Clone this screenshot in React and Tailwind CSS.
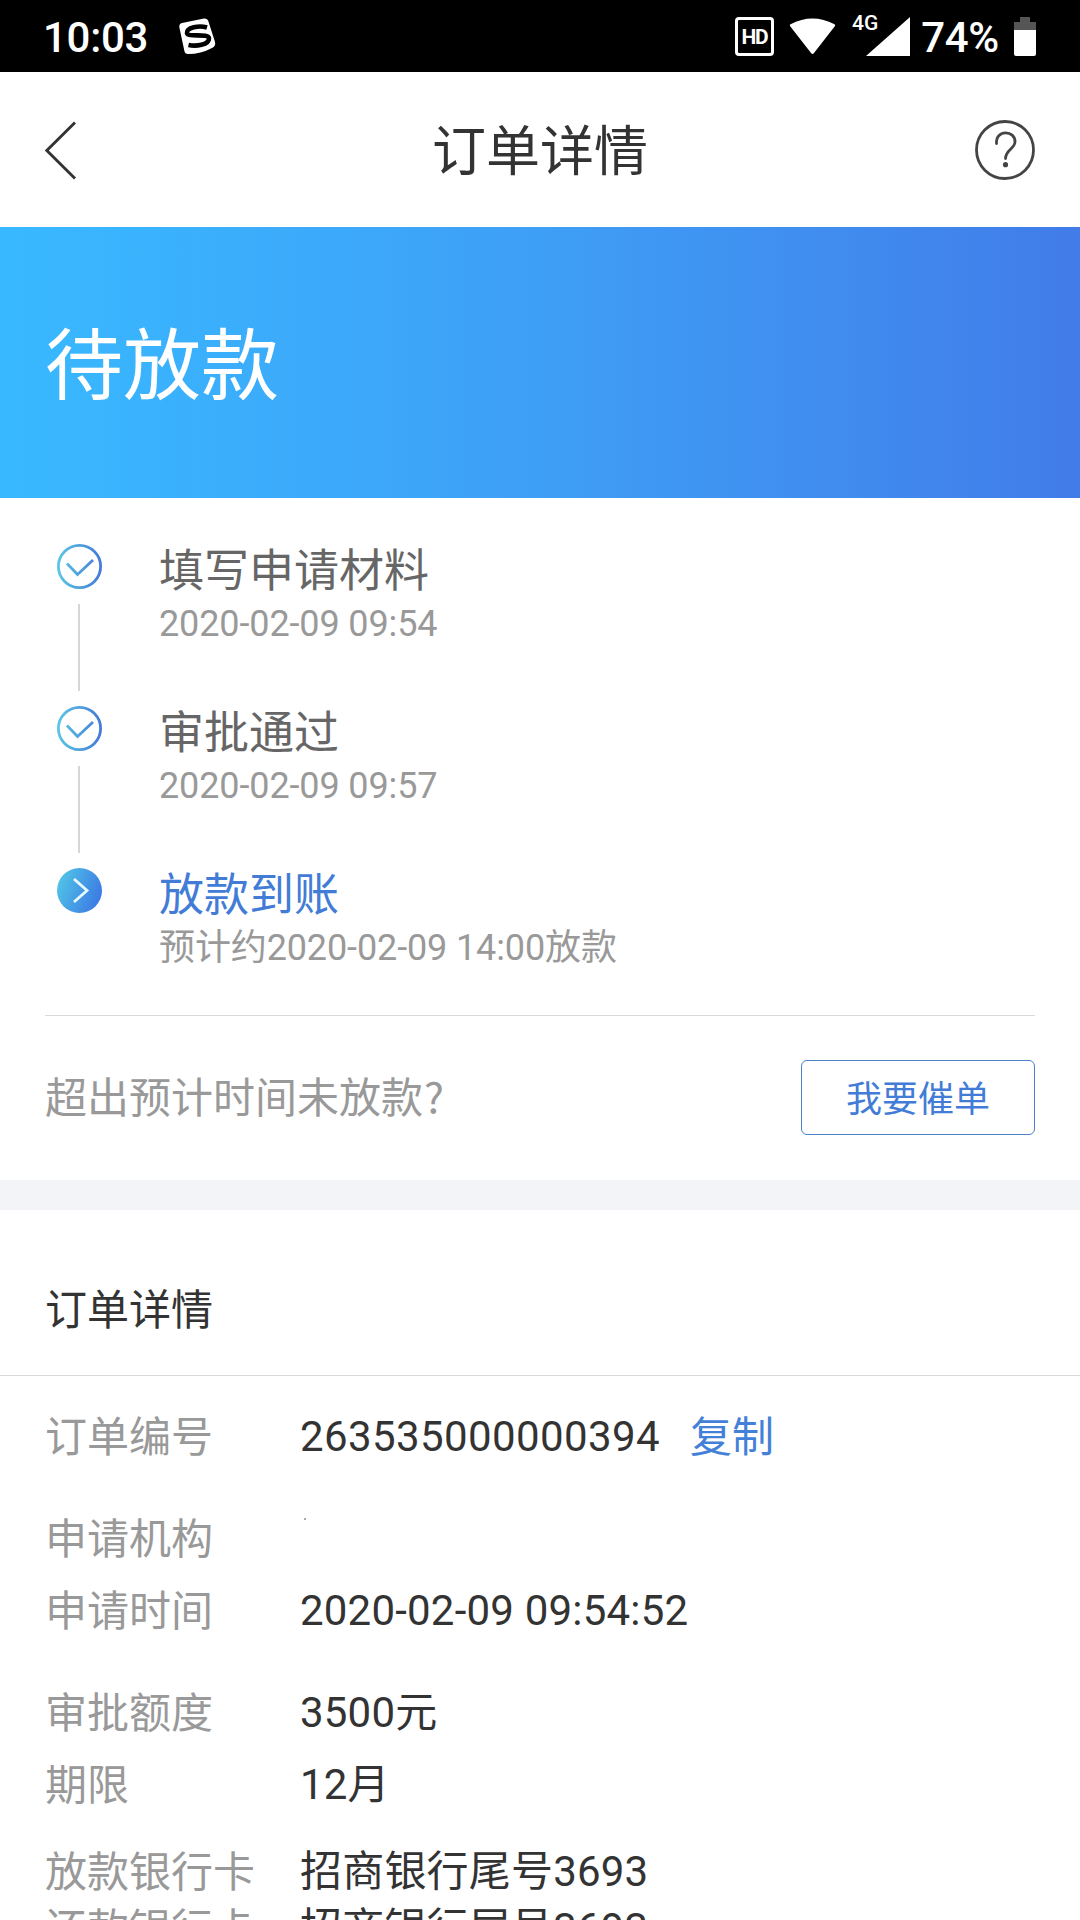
const steps = [
  { title: '填写申请材料', note: '2020-02-09 09:54', done: true },
  { title: '审批通过', note: '2020-02-09 09:57', done: true },
  { title: '放款到账', note: '预计约2020-02-09 14:00放款', done: false },
]

const detailGroups = [
  [{ label: '订单编号', value: '263535000000394', copy: true }],
  [
    { label: '申请机构', value: '' },
    { label: '申请时间', value: '2020-02-09 09:54:52' },
  ],
  [
    { label: '审批额度', value: '3500元' },
    { label: '期限', value: '12月' },
  ],
]

const cards = [
  { label: '放款银行卡', value: '招商银行尾号3693' },
  { label: '还款银行卡', value: '招商银行尾号3693' },
]

function StatusBar() {
  return (
    <div className="flex h-[72px] items-center bg-black pl-[43px] pr-[44px] text-[42px] font-medium leading-[72px] text-white">
      <span className="pt-[3px] tracking-[-0.3px]">10:03</span>
      <svg className="ml-[31px] h-[36px] w-[37px]" viewBox="0 0 37 36">
        <path
          d="M3 5 L25 0.5 Q28.5 0 29.3 3 L36 24 Q37 28 33 30 Q22 36 9 36 Q6 36 5.4 33 L0.3 9 Q0 5.8 3 5Z"
          fill="#fff"
        />
        <path
          d="M28 9.5 C20 7 7.5 9.5 8 15 C8.5 20 30 14.5 30 20.5 C30 27 17 28.5 9.500 27"
          fill="none"
          stroke="#000"
          strokeWidth="4.6"
        />
      </svg>
      <div className="ml-auto flex h-[39px] w-[39px] items-center justify-center rounded-[4px] border-[3px] border-white pt-[2px] text-[21px] font-bold leading-none tracking-[-1.2px]">
        HD
      </div>
      <svg className="ml-[15px] h-[37px] w-[47px]" viewBox="0 0 47 37">
        <path d="M1 8 Q0.5 7 1.5 6.3 Q23.5 -5.5 45.5 6.3 Q46.5 7 46 8 L25 35 Q23.5 37 22 35Z" fill="#fff" />
      </svg>
      <span className="ml-[16px] h-[38px] text-[21px] leading-[12px]">4G</span>
      <svg className="-ml-[12px] h-[39px] w-[44px]" viewBox="0 0 44 39">
        <path d="M44 0V39H0Z" fill="#fff" />
      </svg>
      <span className="ml-[11px] pt-[3px] tracking-[-0.3px]">74%</span>
      <svg className="ml-[15px] h-[39px] w-[22px] flex-none" viewBox="0 0 22 39">
        <path d="M6 0H16V5H22V13H0V5H6Z" fill="#555" />
        <path d="M0 13H22V37Q22 39 20 39H2Q0 39 0 37Z" fill="#fff" />
      </svg>
    </div>
  )
}

function Header() {
  return (
    <header className="flex h-[155px] items-center justify-between px-[45px] text-[#333]">
      <svg className="h-[60px] w-[60px]" viewBox="0 0 60 60" fill="none" stroke="#333" strokeWidth="2.9">
        <path d="M30 2.5 L1.8 30.5 L30 58.5" />
      </svg>
      <h1 className="pt-[7px] text-[54px] leading-[72px]">订单详情</h1>
      <svg className="h-[60px] w-[60px]" viewBox="0 0 60 60" fill="none" stroke="#444" strokeWidth="2.8">
        <circle cx="30" cy="30" r="28.5" />
        <path d="M21.5 23.5 C20.5 9 40.5 10 40 22 C39.5 29 30.5 30 30.5 38.5" strokeLinecap="round" />
        <circle cx="30.5" cy="44.7" r="2.6" fill="#444" stroke="none" />
      </svg>
    </header>
  )
}

function StepIcon({ done }) {
  return (
    <svg className="h-[45px] w-[45px]" viewBox="0 0 45 45" fill="none">
      <defs>
        <linearGradient id="ring" x1="0" y1="0" x2="45" y2="0" gradientUnits="userSpaceOnUse">
          <stop offset="0" stopColor="#5bc8e4" />
          <stop offset="1" stopColor="#4478d8" />
        </linearGradient>
        <linearGradient id="disc" x1="0" y1="12" x2="45" y2="30" gradientUnits="userSpaceOnUse">
          <stop offset="0" stopColor="#51c5e6" />
          <stop offset="1" stopColor="#3b78e4" />
        </linearGradient>
      </defs>
      {done ? (
        <>
          <circle cx="22.5" cy="22.5" r="21.1" stroke="url(#ring)" strokeWidth="2.8" />
          <path d="M10 19.5 L20.5 30.5 L36 16" stroke="url(#ring)" strokeWidth="2.8" />
        </>
      ) : (
        <>
          <circle cx="22.5" cy="22.5" r="22.5" fill="url(#disc)" />
          <path d="M17 11 L30 22.5 L17 34" stroke="#e8fbff" strokeWidth="2.8" />
        </>
      )}
    </svg>
  )
}

function Step({ title, note, done, last }) {
  return (
    <li className="flex h-[162px]">
      <div className="flex w-[45px] flex-col items-center">
        <StepIcon done={done} />
        {!last && <div className="mr-[1px] mt-[15px] h-[87px] w-[2px] bg-[#d6d6d6]" />}
      </div>
      <div className="ml-[57px]">
        <p className={`pt-[2px] text-[45px] leading-[51px] ${done ? 'text-[#666]' : 'text-[#427cd6]'}`}>{title}</p>
        <p className="mt-[6px] text-[36px] leading-[42px] tracking-[-0.12px] text-[#999]">{note}</p>
      </div>
    </li>
  )
}

function DetailRow({ label, value, copy }) {
  return (
    <div className="flex h-[57px] text-[42px] leading-[57px]">
      <span className="w-[255px] pt-[3px] text-[#999]">{label}</span>
      {value ? (
        <span className={`pt-[2px] text-[#333] ${copy ? 'tracking-[0.4px]' : 'tracking-[0.2px]'}`}>{value}</span>
      ) : (
        <span className="ml-[4px] mt-[10px] h-[2px] w-[2px] bg-[#aaa]" />
      )}
      {copy && <button className="ml-[30px] h-[60px] pt-[3px] text-[#4381d8]">复制</button>}
    </div>
  )
}

export default function App() {
  return (
    <main className="h-[1920px] w-[1080px] overflow-hidden bg-white font-['Roboto','Noto_Sans_CJK_SC',sans-serif]">
      <StatusBar />
      <Header />
      <section className="flex h-[271px] items-center bg-linear-to-r from-[#38b9ff] via-[#3e9ff6] to-[#417ce9] px-[45px] pt-[10px]">
        <h2 className="text-[78px] leading-[90px] text-white">待放款</h2>
      </section>

      <ol className="h-[517px] pl-[57px] pt-[46px]">
        {steps.map((step, i) => (
          <Step key={step.title} {...step} last={i === steps.length - 1} />
        ))}
      </ol>

      <div className="mx-[45px] flex h-[165px] items-center justify-between border-t border-[#d9d9d9] pb-[1px]">
        <p className="pb-[6px] font-['Noto_Sans_CJK_SC',sans-serif] text-[42px] leading-[57px] text-[#999]">
          超出预计时间未放款<span className="ml-[1px]">?</span>
        </p>
        <button className="h-[75px] w-[234px] rounded-[6px] border border-[#4a80c8] pt-[6px] text-[36px] leading-[67px] text-[#427cd6]">
          我要催单
        </button>
      </div>

      <div className="h-[30px] bg-[#f2f4f8]" />

      <h3 className="h-[166px] border-b border-[#d9d9d9] px-[45px] pt-[72px] text-[42px] leading-[57px] text-[#333]">
        订单详情
      </h3>
      <div className="flex flex-col gap-[45px] px-[45px] pt-[30px]">
        {detailGroups.map((rows) => (
          <div key={rows[0].label} className="flex flex-col gap-[15px]">
            {rows.map((row) => (
              <DetailRow key={row.label} {...row} />
            ))}
          </div>
        ))}
      </div>
      <div className="mt-[30px] px-[45px]">
        {cards.map((card) => (
          <DetailRow key={card.label} {...card} />
        ))}
      </div>
    </main>
  )
}
